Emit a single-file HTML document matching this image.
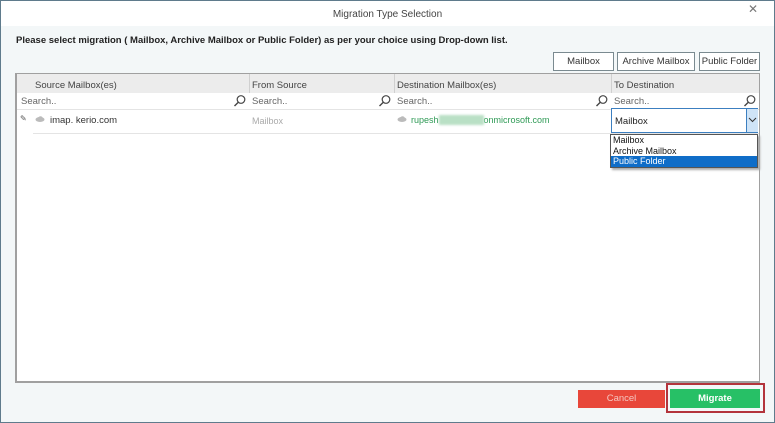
<!DOCTYPE html>
<html><head><style>
*{margin:0;padding:0;box-sizing:border-box}
body{width:775px;height:423px;overflow:hidden;font-family:"Liberation Sans",sans-serif;font-size:9px;color:#333;position:relative;background:#f3f7f8}
.abs{position:absolute}
.win{left:0;top:0;width:775px;height:423px;border:1px solid #5f7b8c;background:#f3f7f8}
.title{left:1px;top:1px;width:773px;height:25px;background:#fff;text-align:center;line-height:28px;font-size:10px;color:#444}
.btn{background:#fff;border:1px solid #7a8a90;text-align:center;line-height:16px;font-size:9.5px;color:#333}
.grid{left:15px;top:73px;width:745px;height:310px;background:#fff;border:1px solid #a0a0a0;border-width:1px 1px 2px 2px}
.hdr{background:#ececec;height:19px;top:0;left:0;width:742px}
.col{font-size:9.5px;color:#444}
.srch{color:#666;font-size:9.5px}
</style></head><body>
<div class="abs win"></div>
<div class="abs title">Migration Type Selection</div>
<div class="abs" style="left:748px;top:2px;font-size:12px;color:#777">✕</div>
<div class="abs" style="left:16px;top:35px;font-weight:bold;font-size:9.5px;color:#222">Please select migration ( Mailbox, Archive Mailbox or Public Folder) as per your choice using Drop-down list.</div>
<div class="abs btn" style="left:553px;top:52px;width:61px;height:19px;line-height:18px">Mailbox</div>
<div class="abs btn" style="left:617px;top:52px;width:78px;height:19px;line-height:18px">Archive Mailbox</div>
<div class="abs btn" style="left:699px;top:52px;width:61px;height:19px;line-height:18px">Public Folder</div>
<div class="abs grid">
 <div class="abs hdr"></div>
 <div class="abs col" style="left:18px;top:6px">Source Mailbox(es)</div>
 <div class="abs col" style="left:235px;top:6px">From Source</div>
 <div class="abs col" style="left:380px;top:6px">Destination Mailbox(es)</div>
 <div class="abs col" style="left:597px;top:6px">To Destination</div>
 <div class="abs" style="left:232px;top:0;width:1px;height:19px;background:#d0d0d0"></div>
 <div class="abs" style="left:377px;top:0;width:1px;height:19px;background:#d0d0d0"></div>
 <div class="abs" style="left:594px;top:0;width:1px;height:19px;background:#d0d0d0"></div>
 <div class="abs srch" style="left:4px;top:22px">Search..</div>
 <div class="abs srch" style="left:235px;top:22px">Search..</div>
 <div class="abs srch" style="left:380px;top:22px">Search..</div>
 <div class="abs srch" style="left:597px;top:22px">Search..</div>
 <svg class="abs" style="left:216px;top:20px" width="14" height="14"><circle cx="8" cy="5.5" r="3.8" fill="none" stroke="#444" stroke-width="1.2"/><line x1="5.3" y1="8.3" x2="1.5" y2="12" stroke="#444" stroke-width="1.4"/></svg>
 <svg class="abs" style="left:361px;top:20px" width="14" height="14"><circle cx="8" cy="5.5" r="3.8" fill="none" stroke="#444" stroke-width="1.2"/><line x1="5.3" y1="8.3" x2="1.5" y2="12" stroke="#444" stroke-width="1.4"/></svg>
 <svg class="abs" style="left:578px;top:20px" width="14" height="14"><circle cx="8" cy="5.5" r="3.8" fill="none" stroke="#444" stroke-width="1.2"/><line x1="5.3" y1="8.3" x2="1.5" y2="12" stroke="#444" stroke-width="1.4"/></svg>
 <svg class="abs" style="left:726px;top:20px" width="14" height="14"><circle cx="8" cy="5.5" r="3.8" fill="none" stroke="#444" stroke-width="1.2"/><line x1="5.3" y1="8.3" x2="1.5" y2="12" stroke="#444" stroke-width="1.4"/></svg>
 <div class="abs" style="left:0;top:35px;width:742px;height:1px;background:#e4e4e4"></div>
 <div class="abs" style="left:16px;top:59px;width:726px;height:1px;background:#e4e4e4"></div>
 <div class="abs" style="left:3px;top:40px;font-size:8px;color:#555">✎</div>
 <svg class="abs" style="left:18px;top:42px" width="10" height="6"><ellipse cx="5" cy="3.5" rx="4.5" ry="2.5" fill="#bbb"/><circle cx="5.5" cy="2.5" r="2.3" fill="#bbb"/></svg>
 <div class="abs" style="left:33px;top:41px;font-size:9.5px;color:#333">imap. kerio.com</div>
 <div class="abs" style="left:235px;top:42px;font-size:9px;color:#aaa">Mailbox</div>
 <svg class="abs" style="left:380px;top:42px" width="10" height="6"><ellipse cx="5" cy="3.5" rx="4.5" ry="2.5" fill="#bbb"/><circle cx="5.5" cy="2.5" r="2.3" fill="#bbb"/></svg>
 <div class="abs" style="left:394px;top:41px;font-size:9px;color:#2e9a55">rupesh<span style="background:#b9e0c5;color:#b9e0c5;filter:blur(1px)">xxxxxxxxxx</span>onmicrosoft.com</div>
 <div class="abs" style="left:594px;top:34px;width:147px;height:25px;border:1px solid #3c7fc0;background:#fff"></div>
 <div class="abs" style="left:598px;top:42px;font-size:9.5px;color:#222">Mailbox</div>
 <div class="abs" style="left:729px;top:35px;width:12px;height:23px;background:#cfe4f7;border-left:1px solid #3c7fc0"></div>
 <svg class="abs" style="left:731px;top:43px" width="9" height="6"><polyline points="1,1 4.5,4.5 8,1" fill="none" stroke="#333" stroke-width="1"/></svg>
 <div class="abs" style="left:593px;top:60px;width:148px;height:34px;border:1px solid #555;background:#fff;box-shadow:2px 2px 2px #aaa;font-size:9px;line-height:10.5px;color:#111">
  <div style="padding-left:2px">Mailbox</div>
  <div style="padding-left:2px">Archive Mailbox</div>
  <div style="padding-left:2px;background:#0f6dc8;color:#fff">Public Folder</div>
 </div>
</div>
<div class="abs" style="left:578px;top:390px;width:87px;height:18px;background:#e8473a;color:#f5c6c0;text-align:center;line-height:18px;font-size:9.5px">Cancel</div>
<div class="abs" style="left:666px;top:383px;width:99px;height:30px;border:2px solid #b3343c"></div>
<div class="abs" style="left:670px;top:389px;width:90px;height:19px;background:#27c066;color:#fff;text-align:center;line-height:19px;font-size:9.5px;font-weight:bold">Migrate</div>
</body></html>
